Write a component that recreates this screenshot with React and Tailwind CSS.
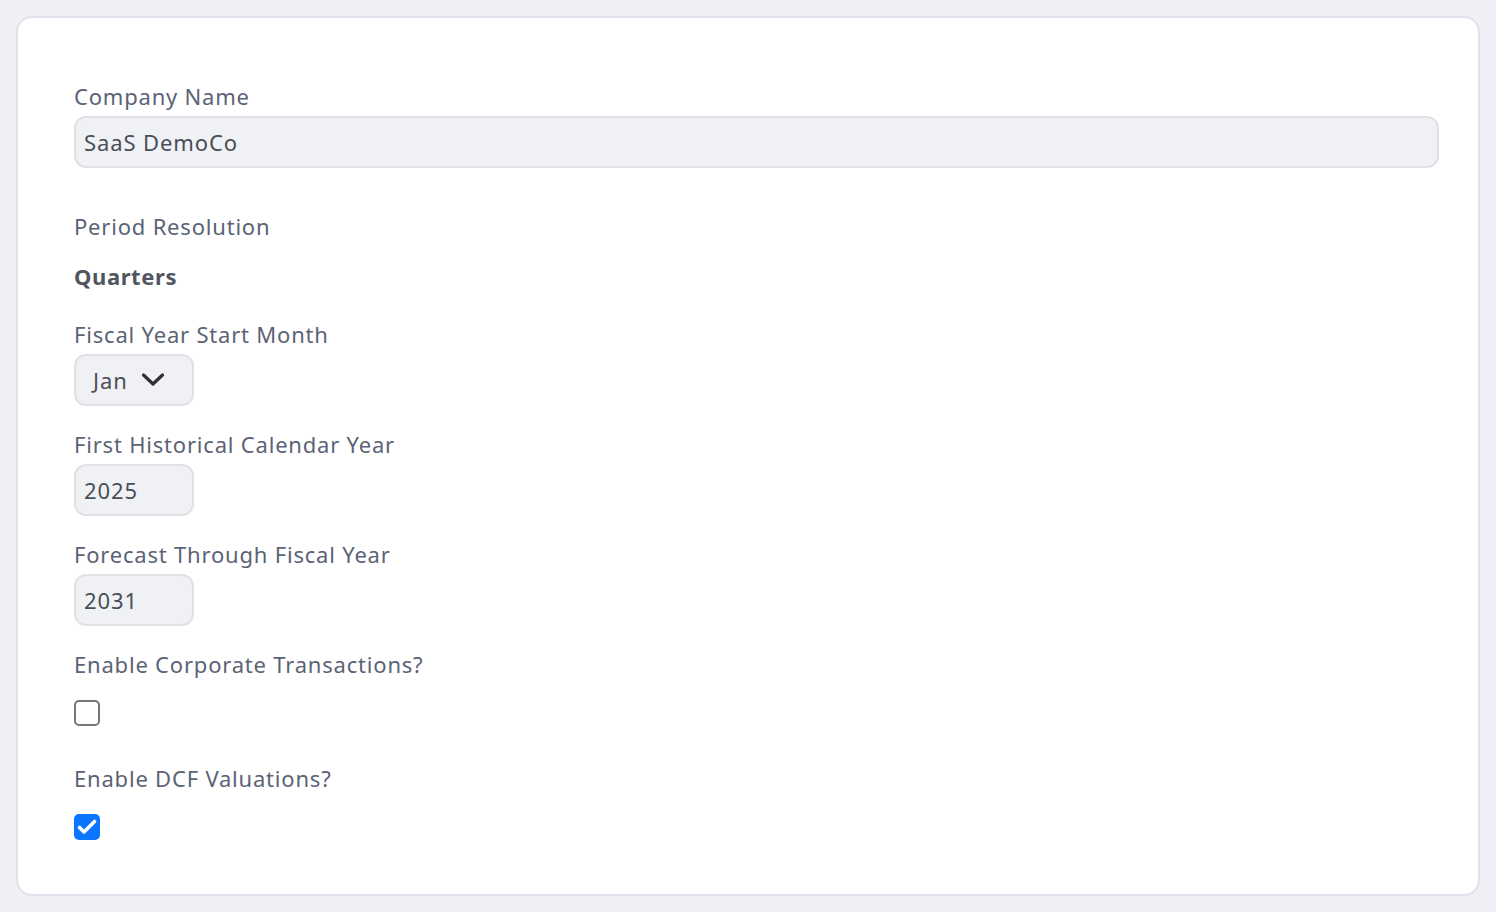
import { useState } from 'react'

const FONT = { fontFamily: '"Noto Sans", "Open Sans", sans-serif' }

function Label({ children, className = '' }) {
  return <div className={`text-[22px] leading-[30px] tracking-[0.8px] text-[#5b6375] ${className}`}>{children}</div>
}

function Checkbox({ checked, onChange }) {
  return (
    <button
      type="button"
      onClick={() => onChange(!checked)}
      className={`flex items-center justify-center w-[26px] h-[26px] rounded-[5px] ${
        checked ? 'bg-[#0a75ff]' : 'border-2 border-[#767676] bg-white'
      }`}
    >
      {checked && (
        <svg width="26" height="26" viewBox="0 0 26 26" fill="none">
          <path d="M5.5 13.5l4.5 4.5L20.5 7.5" stroke="#fff" strokeWidth="3.6" strokeLinecap="round" strokeLinejoin="round" />
        </svg>
      )}
    </button>
  )
}

const field = 'h-[52px] flex items-center bg-[#f0f1f5] border-2 border-[#dfe1e7] rounded-[12px] text-[22px] tracking-[0.9px] text-[#4a4e58]'

export default function App() {
  const [corp, setCorp] = useState(false)
  const [dcf, setDcf] = useState(true)

  return (
    <div className="min-h-screen bg-[#eff0f5] p-4" style={FONT}>
      <div className="bg-white border-2 border-[#e1e2ec] rounded-[16px] pl-[56px] pr-[39px] pt-[63px] pb-[54px]">
        {/* Company */}
        <Label>Company Name</Label>
        <div className={`mt-[5px] px-[8px] ${field}`}>SaaS DemoCo</div>

        {/* Period */}
        <Label className="mt-[43px]">Period Resolution</Label>
        <div className="mt-[20px] text-[22px] leading-[30px] tracking-[0.6px] font-bold text-[#51555e]">Quarters</div>

        {/* Fiscal start */}
        <Label className="mt-[28px]">Fiscal Year Start Month</Label>
        <div className={`mt-[5px] w-[120px] gap-[13px] pl-[17px] ${field}`}>
          <span>Jan</span>
          <svg width="24" height="16" viewBox="0 0 24 16" fill="none">
            <path d="M2.5 3l9.5 9 9.5-9" stroke="#2f3136" strokeWidth="3.2" strokeLinecap="round" strokeLinejoin="round" />
          </svg>
        </div>

        <Label className="mt-[23px]">First Historical Calendar Year</Label>
        <div className={`mt-[5px] w-[120px] px-[8px] ${field}`}>2025</div>

        <Label className="mt-[23px]">Forecast Through Fiscal Year</Label>
        <div className={`mt-[5px] w-[120px] px-[8px] ${field}`}>2031</div>

        <Label className="mt-[23px]">Enable Corporate Transactions?</Label>
        <div className="mt-[21px]">
          <Checkbox checked={corp} onChange={setCorp} />
        </div>

        <Label className="mt-[37px]">Enable DCF Valuations?</Label>
        <div className="mt-[21px]">
          <Checkbox checked={dcf} onChange={setDcf} />
        </div>
      </div>
    </div>
  )
}
